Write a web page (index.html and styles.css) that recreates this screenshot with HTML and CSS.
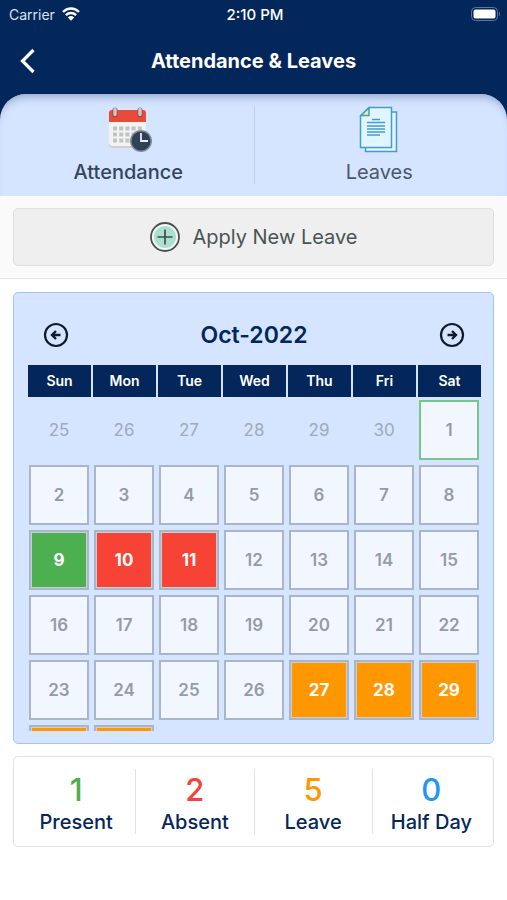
FILE: index.html
```html
<!DOCTYPE html>
<html lang="en">
<head>
<meta charset="utf-8">
<meta name="viewport" content="width=device-width, initial-scale=1">
<title>Attendance &amp; Leaves</title>
<link rel="stylesheet" href="styles.css">
</head>
<body>
<header class="top">
  <div class="status">
    <div class="carrier">
      <span>Carrier</span>
      <svg width="18" height="14" viewBox="0 0 18 14" fill="none" stroke="#fff" stroke-width="2.4" aria-hidden="true">
        <path d="M1 5C5.500 .3 12.500 .3 17 5M3.900 8.100C6.800 5.300 11.200 5.300 14.100 8.100"/>
        <path d="M9 13.700L5.800 10.500Q9 7.700 12.200 10.500Z" fill="#fff" stroke="none"/>
      </svg>
    </div>
    <span class="clock">2:10 PM</span>
    <svg class="battery" width="30" height="14" viewBox="0 0 30 14" aria-hidden="true">
      <rect x=".5" y=".5" width="26" height="13" rx="4" fill="none" stroke="#63759a"/>
      <rect x="2.500" y="2.500" width="22" height="9" rx="2" fill="#fff"/>
      <path d="M28 4.500Q30 7 28 9.500Z" fill="#63759a"/>
    </svg>
  </div>
  <div class="titlebar">
    <button class="back" type="button" aria-label="Back">
      <svg width="16" height="26" viewBox="0 0 16 26" fill="none" stroke="#fff" stroke-width="3.200" aria-hidden="true"><path d="M14.500 2L3.500 13L14.500 24"/></svg>
    </button>
    <h1>Attendance &amp; Leaves</h1>
  </div>
  <nav class="tabs">
    <a class="tab active" href="#attendance">
      <svg width="46" height="48" viewBox="-2 0 46 48" overflow="visible" aria-hidden="true">
        <path d="M2 13H39V38Q39 42 35 42H6Q2 42 2 38Z" fill="#d0d1cf"/>
        <path d="M2 13H39V36Q39 40 35 40H6Q2 40 2 36Z" fill="#f4f3f1"/>
        <path d="M2 16V7Q2 4 5 4H36Q39 4 39 7V16Z" fill="#e64c3c"/>
        <path d="M8 4V9M33 4V9" fill="none" stroke="#b93c30" stroke-width="5" stroke-linecap="round"/>
        <path d="M8 3V8.500M33 3V8.500" fill="none" stroke="#c3cad0" stroke-width="3.400" stroke-linecap="round"/>
        <path d="M6 22.500H35M6 28.500H35M6 34.500H35" fill="none" stroke="#bfc4c7" stroke-width="4" stroke-dasharray="4 2.200"/>
        <circle cx="34" cy="35" r="11" fill="#7f8f99"/>
        <circle cx="34" cy="35" r="9.500" fill="#2f4057"/>
        <path d="M34 27V35H41" fill="none" stroke="#e9eef2" stroke-width="1.800"/>
      </svg>
      <span>Attendance</span>
    </a>
    <a class="tab" href="#leaves">
      <svg width="40" height="48" viewBox="0 0 40 48" fill="#e0f6ff" stroke="#489bc5" stroke-width="1.500" aria-hidden="true">
        <path d="M7 6H37.500V45.500H6.500V40"/>
        <path d="M10 1.500H32.500V41.500H1.500V10Z"/>
        <path d="M10 2V9.500H2Z" fill="#eff3a0"/>
        <path d="M13 13.500H21M8 16.500H26M8 20H26M8 23H26M8 26H26M8 29H21" fill="none"/>
      </svg>
      <span>Leaves</span>
    </a>
  </nav>
</header>

<main>
  <section class="apply">
    <button class="apply-btn" type="button">
      <svg width="32" height="32" viewBox="0 0 32 32" aria-hidden="true">
        <circle cx="16" cy="16" r="14" fill="#f3f7f5" stroke="#4a4f50" stroke-width="1.800"/>
        <circle cx="16" cy="16" r="11" fill="#abdfcf"/>
        <path d="M8.500 16H23.500M16 8.500V23.500" stroke="#3e4d4b" stroke-width="1.700"/>
      </svg>
      <span>Apply New Leave</span>
    </button>
  </section>

  <section class="calendar">
    <div class="month">
      <button type="button" aria-label="Previous month">
        <svg width="26" height="26" viewBox="0 0 26 26" fill="none" stroke="#111a28" stroke-width="2.200" aria-hidden="true"><circle cx="13" cy="13" r="11"/><path d="M17.500 13H9.500M13 9L9 13L13 17" stroke-width="2.400"/></svg>
      </button>
      <h2>Oct-2022</h2>
      <button type="button" aria-label="Next month">
        <svg width="26" height="26" viewBox="0 0 26 26" fill="none" stroke="#111a28" stroke-width="2.200" aria-hidden="true"><circle cx="13" cy="13" r="11"/><path d="M8.500 13H16.500M13 9L17 13L13 17" stroke-width="2.400"/></svg>
      </button>
    </div>
    <div class="days">
      <table>
        <thead><tr><th>Sun</th><th>Mon</th><th>Tue</th><th>Wed</th><th>Thu</th><th>Fri</th><th>Sat</th></tr></thead>
        <tbody>
          <tr><td><div class="day other">25</div></td><td><div class="day other">26</div></td><td><div class="day other">27</div></td><td><div class="day other">28</div></td><td><div class="day other">29</div></td><td><div class="day other">30</div></td><td><div class="day today">1</div></td></tr>
          <tr><td><div class="day">2</div></td><td><div class="day">3</div></td><td><div class="day">4</div></td><td><div class="day">5</div></td><td><div class="day">6</div></td><td><div class="day">7</div></td><td><div class="day">8</div></td></tr>
          <tr><td><div class="day marked present">9</div></td><td><div class="day marked absent">10</div></td><td><div class="day marked absent">11</div></td><td><div class="day">12</div></td><td><div class="day">13</div></td><td><div class="day">14</div></td><td><div class="day">15</div></td></tr>
          <tr><td><div class="day">16</div></td><td><div class="day">17</div></td><td><div class="day">18</div></td><td><div class="day">19</div></td><td><div class="day">20</div></td><td><div class="day">21</div></td><td><div class="day">22</div></td></tr>
          <tr><td><div class="day">23</div></td><td><div class="day">24</div></td><td><div class="day">25</div></td><td><div class="day">26</div></td><td><div class="day marked leave">27</div></td><td><div class="day marked leave">28</div></td><td><div class="day marked leave">29</div></td></tr>
          <tr><td><div class="day marked leave"></div></td><td><div class="day marked leave"></div></td><td></td><td></td><td></td><td></td><td></td></tr>
        </tbody>
      </table>
    </div>
  </section>

  <dl class="stats">
    <div class="stat"><dd class="c-present">1</dd><dt>Present</dt></div>
    <div class="stat"><dd class="c-absent">2</dd><dt>Absent</dt></div>
    <div class="stat"><dd class="c-leave">5</dd><dt>Leave</dt></div>
    <div class="stat"><dd class="c-half">0</dd><dt>Half Day</dt></div>
  </dl>
</main>
</body>
</html>
```
FILE: styles.css
```css
* { box-sizing: border-box; }

body {
  margin: 0;
  background: #fff;
  font-family: Inter, "Liberation Sans", sans-serif;
  color: #03265b;
}

h1, h2, dl, dd { margin: 0; }

button {
  padding: 0;
  border: 0;
  background: none;
  font: inherit;
  color: inherit;
}

svg { display: block; flex: none; }

.top { background: #03265b; }

.status {
  display: grid;
  grid-template-columns: 1fr auto 1fr;
  align-items: center;
  height: 28px;
  padding: 0 6px 0 9px;
  color: #fff;
  font-size: 14px;
}
.carrier { display: flex; align-items: center; gap: 7px; color: #dbe2ec; }
.clock { font-size: 15px; font-weight: 500; }
.battery { justify-self: end; }

.titlebar {
  display: grid;
  grid-template-columns: 48px 1fr 48px;
  align-items: center;
  height: 66px;
}
.back { display: flex; padding-left: 19px; }
h1 {
  color: #fff;
  font-size: 20px;
  font-weight: 700;
  line-height: 24px;
  text-align: center;
}

.tabs {
  display: grid;
  grid-template-columns: 1fr 1fr;
  padding: 12px 3px;
  border-radius: 26px 26px 0 0;
  background: #d5e4ff;
  box-shadow: inset 0 9px 8px -6px #93a8cc;
}
.tab {
  display: flex;
  flex-direction: column;
  align-items: center;
  gap: 6px;
  height: 78px;
  color: #4b586b;
  font-size: 20px;
  line-height: 24px;
  text-decoration: none;
}
.tab + .tab { border-left: 1px solid #c1cfe4; }
.active { color: #34445c; font-weight: 500; }

.apply {
  padding: 12px 13px;
  background: #fafafa;
  border-bottom: 1px solid #e2e2e2;
}
.apply-btn {
  display: flex;
  align-items: center;
  justify-content: center;
  gap: 11px;
  width: 100%;
  height: 58px;
  border: 1px solid #dedede;
  border-radius: 5px;
  background: #efefef;
  color: #4a5354;
  font-size: 20px;
}

.calendar {
  margin: 13px 13px 12px;
  padding: 0 10px 12px 14px;
  border: 1px solid #9fc6f8;
  border-radius: 5px;
  background: #d5e4ff;
}
.month {
  display: flex;
  align-items: center;
  justify-content: space-between;
  height: 72px;
  padding: 12px 18px 0 15px;
}
h2 { font-size: 23px; font-weight: 600; line-height: 28px; }

.days { height: 366px; overflow: hidden; }
table { width: 100%; table-layout: fixed; border-collapse: separate; border-spacing: 0; }
th {
  height: 35px;
  padding: 0 0 2px;
  border-right: 2px solid transparent;
  border-bottom: 3px solid transparent;
  background: #03265b;
  background-clip: padding-box;
  color: #fff;
  font-size: 14px;
  font-weight: 600;
}
td { height: 65px; padding: 0 4px 5px 1px; }
.day {
  display: flex;
  align-items: center;
  justify-content: center;
  height: 60px;
  border: 2px solid #a9b6c9;
  background: #f2f7ff;
  color: #959ba5;
  font-size: 17px;
  font-weight: 600;
}
.other { border-color: transparent; background: none; color: #a0aab8; font-weight: 400; }
.today { border-color: #78c58d; }
.marked { box-shadow: inset 0 0 0 1px #ccd0d2; color: #fff; font-weight: 700; }
.present { background: #4caf50; }
.absent { background: #f64336; }
.leave { background: #ff9800; }

.stats {
  display: grid;
  grid-template-columns: repeat(4, 1fr);
  margin: 0 13px;
  padding: 12px 3px;
  border: 1px solid #e2e2e2;
  border-radius: 5px;
}
.stat {
  display: flex;
  flex-direction: column;
  height: 65px;
  padding-top: 1px;
  text-align: center;
}
.stat + .stat { border-left: 1px solid #e2e2e2; }
dd { font-size: 31px; font-weight: 500; line-height: 40px; }
dt { font-size: 20px; font-weight: 500; line-height: 24px; }
.c-present { color: #4caf50; }
.c-absent { color: #f64336; }
.c-leave { color: #ff9800; }
.c-half { color: #2196f3; }
```
